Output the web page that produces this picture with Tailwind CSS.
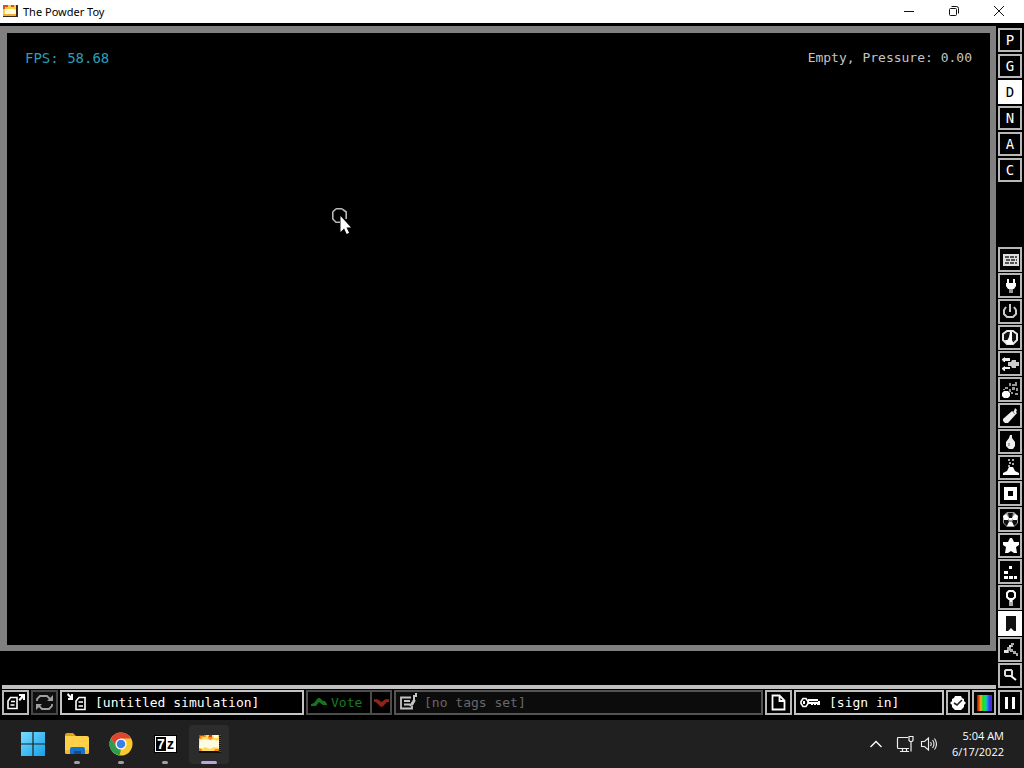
<!DOCTYPE html>
<html lang="en">
<head>
<meta charset="utf-8">
<title>The Powder Toy</title>
<script src="https://cdn.jsdelivr.net/npm/@tailwindcss/browser@4"></script>
</head>
<body class="flex h-screen flex-col overflow-hidden bg-black font-['Open_Sans',sans-serif]">
<header class="flex h-[23px] shrink-0 items-center bg-white text-black">
  <svg class="ml-[3px] h-4 w-4" viewBox="0 0 16 16" aria-hidden="true"><path fill="#3b2a20" d="M0 1h15v12H0z"/><path fill="#f7d23a" d="M0 1h13v10H0z"/><path fill="#fffbe0" d="M2 5h9l2 1v4H2z"/><path fill="#e8452a" d="M0 1h5v2H2v2H0zM8 1h3v2H8z"/><path fill="#f5b02e" d="M0 10h13v2H0z"/></svg>
  <h1 class="ml-1 text-[11px] leading-4 font-['Noto_Sans',sans-serif]">The Powder Toy</h1>
  <div class="ml-auto flex h-full pr-[2px]">
    <button aria-label="Minimize" class="flex w-[45px] items-center justify-center"><svg class="h-3 w-3" viewBox="0 0 12 12"><path stroke="#111" d="M1 5.500h10"/></svg></button>
    <button aria-label="Restore" class="flex w-[45px] items-center justify-center"><svg class="h-3 w-3" viewBox="0 0 12 12" fill="none" stroke="#111"><rect x="1.500" y="2.500" width="7" height="7" rx="1"/><path d="M3.500 .5h5a2 2 0 0 1 2 2v5"/></svg></button>
    <button aria-label="Close" class="flex w-[46px] items-center justify-center"><svg class="h-3 w-3" viewBox="0 0 12 12"><path stroke="#111" d="M1 0l10 10M11 0L1 10"/></svg></button>
  </div>
</header>

<main class="flex min-h-0 flex-1 gap-[2px] bg-black pr-[2px] pb-[5px] font-['DejaVu_Sans_Mono',monospace]">
  <div class="flex min-w-0 flex-1 flex-col pt-[3px]">
    <section aria-label="Simulation" class="relative flex flex-1 items-start justify-between border-[7px] border-r-[6px] border-b-[6px] border-[#808080] px-[18px] pt-4">
      <p class="text-[14px] leading-[18px] text-[#2c9db8]">FPS: 58.68</p>
      <p class="text-[13px] leading-[18px] text-[#c4c4c4]">Empty, Pressure: 0.00</p>
      <svg class="absolute top-[174px] left-[324px] h-7 w-5" viewBox="0 0 20 28" aria-hidden="true"><path fill="none" stroke="#b8b8b8" stroke-width="1.600" d="M5 1.800h6M5 1.800L1.800 5v7L5 15.200h4M11 1.800L15.200 5v7"/><path fill="#fff" d="M9.500 9v16l3.600-3.400 2.600 5.400 2.400-1.200-2.600-5.200H20z"/></svg>
    </section>
    <div class="mt-[34px] mb-px ml-[2px] h-1 bg-[#c0c0c0]"></div>
    <div class="flex h-[25px] gap-[2px] pl-[2px] text-[13px] leading-none text-white">
      <button aria-label="Open simulation" class="flex w-[27px] items-center justify-center border-2 border-[#b8b8b8]"><svg class="h-[21px] w-[23px] shrink-0" viewBox="0 0 23 21"><path fill="none" stroke="#fff" stroke-width="1.600" d="M6.500 5.500H13v11H4V9zM7 9.500h4M6.500 13h4"/><path fill="#fff" d="M15 2h6v6h-2V6l-3 3-1.500-1.500L17 4.500V4h-2z"/></svg></button>
      <button aria-label="Reload" class="flex w-[27px] items-center justify-center border-2 border-[#484848] bg-[#101010]"><svg class="h-[21px] w-[23px] shrink-0" viewBox="0 0 23 21"><path fill="none" stroke="#a0a0a0" stroke-width="1.800" d="M4 9V7l3-3h7l4 4M19 12v2l-3 3H9l-4-4"/><path fill="#a0a0a0" d="M20 3v6h-6zM3 18v-6h6z"/></svg></button>
      <button class="flex w-[244px] items-center border-2 border-[#c4c4c4] pl-1"><svg class="mr-[6px] h-[21px] w-[23px] shrink-0" viewBox="0 0 23 21"><path fill="#fff" d="M2 1l3 3V2h2v6H2V6h2L1 3z"/><path fill="none" stroke="#fff" stroke-width="1.600" d="M13 5.500h6v12h-9V9zM12.500 10h4.500M12.500 14h4.500"/></svg>[untitled simulation]</button>
      <div class="flex w-[86px]">
        <button class="flex w-16 items-center gap-1 border-2 border-r-0 border-[#4c4c4c] pl-[3px] text-[#187a22]"><svg class="h-[10px] w-4 shrink-0" viewBox="0 0 16 10"><path fill="#17731f" d="M7 0h2l3 3h2l2 3v1h-4L8 4 5 8H0V6l3-1z"/></svg>Vote</button>
        <button aria-label="Vote down" class="flex flex-1 items-center justify-center border-2 border-[#4c4c4c]"><svg class="h-[10px] w-[15px] shrink-0" viewBox="0 0 16 10"><path fill="#8f2417" d="M0 1h4l4 3 4-3h4v3h-2l-5 5H7L2 4H0z"/></svg></button>
      </div>
      <button class="flex min-w-0 flex-1 items-center border-2 border-[#545454] bg-[#0c0c0c] pl-1 text-[#686868]"><svg class="mr-1 h-[21px] w-5 shrink-0" viewBox="0 0 20 21" fill="none" stroke="#c4c4c4" stroke-width="1.800"><path d="M11 5.500H1v11h11v-3M4 9h6M4 12.500h6"/><path stroke-width="2" d="M10 14l4-6V4h2V1M12 13l3-5"/></svg>[no tags set]</button>
      <button aria-label="New simulation" class="flex w-[27px] items-center justify-center border-2 border-[#b8b8b8]"><svg class="h-[17px] w-[15px]" viewBox="0 0 15 17"><path fill="none" stroke="#fff" stroke-width="1.800" d="M1.500 1.500h7l5 5v9h-12zM8.500 1v6H14"/></svg></button>
      <button class="flex w-[150px] items-center border-2 border-[#c4c4c4] pl-1"><svg class="mr-[9px] h-3 w-5 shrink-0" viewBox="0 0 20 12"><path fill="none" stroke="#fff" stroke-width="1.600" d="M3 1.500h3l2 3v2l-2 3H3l-2-3v-2z"/><path fill="#fff" d="M3 4h2v3H3zM8 2h10v2h2v4h-3V7h-1v1h-2V7h-1v1h-2V7H8z"/><path fill="#222" d="M9 4h9v1H9z"/></svg>[sign in]</button>
      <button aria-label="Simulation options" class="flex w-6 items-center justify-center border-2 border-[#b8b8b8]"><svg class="h-4 w-4" viewBox="0 0 16 16"><path fill="#fff" d="M5 1h6l1 2 2 1v2l2 2-2 2v2l-3 3H5l-3-3v-2L0 8l2-2V4l2-1z"/><path fill="none" stroke="#222" stroke-width="1.600" d="M4 8l3 2 5-5"/></svg></button>
      <button aria-label="Render options" class="flex w-6 items-center justify-center border-2 border-[#b8b8b8]"><span class="h-4 w-[15px] bg-[linear-gradient(90deg,#a0100c_0%,#ff4a00_14%,#d8c020_26%,#20d820_40%,#10e070_55%,#10a8d8_68%,#2840ff_80%,#8018a8_100%)]"></span></button>
    </div>
  </div>

  <nav aria-label="Tools" class="flex w-6 shrink-0 flex-col pt-[5px]">
    <div class="flex flex-col gap-[2px] text-[14px] leading-none text-white">
      <button class="h-6 border-2 border-[#b8b8b8]">P</button>
      <button class="h-6 border-2 border-[#b8b8b8]">G</button>
      <button class="h-6 border-2 border-white bg-white text-black">D</button>
      <button class="h-6 border-2 border-[#b8b8b8]">N</button>
      <button class="h-6 border-2 border-[#b8b8b8]">A</button>
      <button class="h-6 border-2 border-[#b8b8b8]">C</button>
    </div>
    <div class="mt-auto mb-[2px] flex flex-col gap-px">
      <button aria-label="Walls" class="flex h-[25px] items-center justify-center border-2 border-[#b8b8b8]"><svg class="h-5 w-5" viewBox="0 0 20 20"><path fill="#ddd" d="M3 4h16v12H3z"/><path stroke="#222" stroke-width="1.300" stroke-dasharray="4 1" d="M5 7h12M6 10h11M5 13h12"/></svg></button>
      <button aria-label="Electronics" class="flex h-[25px] items-center justify-center border-2 border-[#b8b8b8]"><svg class="h-5 w-5" viewBox="0 0 20 20"><path fill="#fff" d="M7 3h2v4h4V3h2v4h1v3l-2 3H8l-2-3V7h1z"/><path fill="#999" d="M9 13h4v4H9z"/></svg></button>
      <button aria-label="Powered materials" class="flex h-[25px] items-center justify-center border-2 border-[#b8b8b8]"><svg class="h-5 w-5" viewBox="0 0 20 20" fill="none" stroke="#ccc" stroke-width="2"><path d="M6 5L4 8v4l3 3h6l3-3V8l-2-3M10 2v8"/></svg></button>
      <button aria-label="Sensors" class="flex h-[25px] items-center justify-center border-2 border-[#b8b8b8]"><svg class="h-5 w-5" viewBox="0 0 20 20"><path fill="#111" stroke="#e8e8e8" stroke-width="2" d="M7 3h6l4 3v6l-4 4H7l-4-4V6z"/><path fill="#fff" d="M10 4h2v8l1 2v2H7v-3l2-4zM5 12h3v3H6z"/></svg></button>
      <button aria-label="Force" class="flex h-[25px] items-center justify-center border-2 border-[#b8b8b8]"><svg class="h-5 w-5" viewBox="0 0 20 20"><path fill="#eee" d="M2 5l3-2v1h5v3H5v1H4L2 6zM2 14l3-2v1h5v2H5v2H4l-2-2z"/><path fill="#ccc" d="M8 8h3l1-2h4v2h3v4h-3v2h-4l-1-2H8z"/></svg></button>
      <button aria-label="Explosives" class="flex h-[25px] items-center justify-center border-2 border-[#b8b8b8]"><svg class="h-5 w-5" viewBox="0 0 20 20"><path fill="#fff" d="M4 11h4l2 2v3l-2 2H4l-2-2v-3z"/><path fill="#999" d="M9 9h2v3H9zM5 7h3v2H5zM9 3h2v3H9zM12 4h3v2h-3zM15 2h2v4h-2zM12 7h3v3h-3zM16 8h2v3h-2zM11 12h2v2h-2zM15 13h3v2h-3zM3 9h2v1H3z"/></svg></button>
      <button aria-label="Gases" class="flex h-[25px] items-center justify-center border-2 border-[#b8b8b8]"><svg class="h-5 w-5" viewBox="0 0 20 20"><path fill="#eee" d="M15 2l2 2-1 2 1 1-9 10H5l-2-2v-2l9-8 1 1 1-1z"/><path stroke="#888" d="M12 5l3 3"/></svg></button>
      <button aria-label="Liquids" class="flex h-[25px] items-center justify-center border-2 border-[#b8b8b8]"><svg class="h-5 w-5" viewBox="0 0 20 20"><path fill="#eee" d="M10 3h2v3l3 4v4l-2 3H9l-3-3v-4l3-4z"/><path fill="#aaa" d="M8 11h2v3H8z"/></svg></button>
      <button aria-label="Powders" class="flex h-[25px] items-center justify-center border-2 border-[#b8b8b8]"><svg class="h-5 w-5" viewBox="0 0 20 20"><path fill="#fff" d="M9 9h4l2 4 4 2v2H3v-2l4-2z"/><path fill="#aaa" d="M8 1h2v2H8zM12 1h2v2h-2zM9 4h2v2H9zM12 5h2v2h-2zM8 7h2v2H8z"/></svg></button>
      <button aria-label="Solids" class="flex h-[25px] items-center justify-center border-2 border-[#b8b8b8]"><svg class="h-5 w-5" viewBox="0 0 20 20"><path fill="#fff" fill-rule="evenodd" d="M4 3h13v13H4zM8 7v5h5V7z"/></svg></button>
      <button aria-label="Radioactive" class="flex h-[25px] items-center justify-center border-2 border-[#b8b8b8]"><svg class="h-5 w-5" viewBox="0 0 20 20"><path fill="#999" d="M7 2h7l4 4v7l-4 4H7l-4-4V6z"/><path fill="#111" d="M8 3h5l-1 5H9zM4 10h4l1 2-2 4-3-3zM17 10h-4l-1 2 2 4 3-3z"/><path fill="#fff" d="M3 6l3-2 3 4-1 2H4zM18 6l-3-2-3 4 1 2h4zM9 12h3l2 4H7zM9 8h3v2H9z"/></svg></button>
      <button aria-label="Special" class="flex h-[25px] items-center justify-center border-2 border-[#b8b8b8]"><svg class="h-5 w-5" viewBox="0 0 20 20"><path fill="#fff" d="M10 2h2l2 4h5v3l-3 2 1 6h-3l-3-2-3 2H5l1-6-3-2V6h5z"/></svg></button>
      <button aria-label="Game of Life" class="flex h-[25px] items-center justify-center border-2 border-[#b8b8b8]"><svg class="h-5 w-5" viewBox="0 0 20 20"><path fill="#fff" d="M9 4h3v3H9zM4 9h4v3H4zM4 14h4v3H4zM9 14h4v3H9zM14 14h3v3h-3z"/></svg></button>
      <button aria-label="Tools" class="flex h-[25px] items-center justify-center border-2 border-[#b8b8b8]"><svg class="h-5 w-5" viewBox="0 0 20 20"><path fill="none" stroke="#fff" stroke-width="2" d="M9 3h4l2 2v4l-2 2H9L7 9V5z"/><path fill="#aaa" d="M9 12h4v6H9z"/><path fill="#fff" d="M10 11h2v3h-2z"/></svg></button>
      <button aria-label="Favorites" class="flex h-[25px] items-center justify-center border-2 border-white bg-white"><svg class="h-5 w-5" viewBox="0 0 20 20"><path fill="#111" d="M6 2h10v15h-2l-3-3-3 3H6z"/></svg></button>
      <button aria-label="Decoration tools" class="flex h-[25px] items-center justify-center border-2 border-[#b8b8b8]"><svg class="h-5 w-5" viewBox="0 0 20 20"><path fill="#aaa" d="M11 3h3v2h-1v2h-2v2h2v2h3v2h2v3h-2v-2h-3v-2h-3v-1H9v2H4v-3h3V7h2V5h2z"/><path fill="#e4e4e4" d="M4 10h4v3H4zM9 5h2v2H9z"/></svg></button>
      <button aria-label="Search" class="flex h-[25px] items-center justify-center border-2 border-[#b8b8b8]"><svg class="h-5 w-5" viewBox="0 0 20 20"><path fill="none" stroke="#ddd" stroke-width="2" d="M6 4h5l1 1v4l-1 1H6L5 9V5z"/><path fill="none" stroke="#fff" stroke-width="2" d="M11 10l5 4"/></svg></button>
    </div>
    <button aria-label="Pause" class="flex h-[25px] shrink-0 items-center justify-center gap-1 border-2 border-[#b8b8b8]"><span class="h-3 w-[3px] bg-white"></span><span class="h-3 w-[3px] bg-white"></span></button>
  </nav>
</main>

<footer class="flex h-12 shrink-0 items-center bg-[#202020] pr-5 pl-[13px] text-white">
  <nav aria-label="Taskbar" class="flex items-center gap-1">
    <button aria-label="Start" class="flex h-[39px] w-10 items-center justify-center"><svg class="h-6 w-6" viewBox="0 0 24 24"><defs><linearGradient id="win" x2="1" y2="1"><stop stop-color="#78dcff"/><stop offset="1" stop-color="#159fe8"/></linearGradient></defs><path fill="url(#win)" d="M0 0h11.400v11.400H0zM12.600 0H24v11.400H12.600zM0 12.600h11.400V24H0zM12.600 12.600H24V24H12.600z"/></svg></button>
    <button aria-label="File Explorer" class="relative flex h-[39px] w-10 items-center justify-center"><svg class="h-6 w-[26px]" viewBox="0 0 26 24"><path fill="#e2a012" d="M1 3q0-2 2-2h6l3 3H1z"/><path fill="#ffd04a" d="M1 4h22q2 0 2 2v14q0 2-2 2H3q-2 0-2-2z"/><path fill="#f6b92b" d="M1 18h24v2q0 2-2 2H3q-2 0-2-2z"/><path fill="#1673c8" d="M6 22v-5q0-2 2-2h11q2 0 2 2v5z"/><path fill="#0d4f98" d="M10 19h7v3h-7z"/></svg><span class="absolute bottom-0 h-[3px] w-[6px] rounded-full bg-[#a0a0a0]"></span></button>
    <button aria-label="Chrome" class="relative flex h-[39px] w-10 items-center justify-center"><svg class="h-6 w-6" viewBox="0 0 24 24"><circle cx="12" cy="12" r="11.500" fill="#f8c928"/><path fill="#e04336" d="M2 6.200a11.500 11.500 0 0 1 20 .3H12L7 15z"/><path fill="#2d9c4c" d="M2 6.200l5.200 8.600L12 17.500l-1.500 5.900A11.500 11.500 0 0 1 2 6.200z"/><circle cx="12" cy="12" r="5.600" fill="#fff"/><circle cx="12" cy="12" r="4.300" fill="#3c7fe8"/></svg><span class="absolute bottom-0 h-[3px] w-[6px] rounded-full bg-[#a0a0a0]"></span></button>
    <button aria-label="7-Zip" class="relative flex h-[39px] w-10 items-center justify-center"><span class="flex h-[18px] w-[23px] items-center justify-center border border-black bg-white font-['Liberation_Sans',sans-serif] text-[14px] leading-none font-bold"><span class="bg-black px-px text-white">7</span><span class="pl-px text-black">z</span></span><span class="absolute bottom-0 h-[3px] w-[6px] rounded-full bg-[#a0a0a0]"></span></button>
    <button aria-label="The Powder Toy" class="relative flex h-[39px] w-10 items-center justify-center rounded bg-[#2c2c2c]"><svg class="h-5 w-[23px]" viewBox="0 0 23 20"><path fill="#111" d="M1 1h22v18H1z"/><path fill="#ffd95c" d="M1 1h20v16H1z"/><path fill="#fffbe0" d="M2 6l5-1 3 1 4-1 5 2 2-1v8l-5-1-4 2-5-2-3 2-3-1zM15 1h5v3h-4z"/><path fill="#f98a1c" d="M1 1h7v2H4L3 5H1zM10 2l4 1 1 2-3 1-2-2zM1 14l3 1v2H1zM17 15h4v2h-5z"/><path fill="#d8331c" d="M1 1h5v1H2v2H1zM11 1h3v2h-3z"/><path stroke="#888" stroke-dasharray="1 1" d="M22 1v17"/></svg><span class="absolute bottom-0 h-[3px] w-4 rounded-full bg-[#bda2dc]"></span></button>
  </nav>
  <div class="ml-auto flex items-center">
    <button aria-label="Show hidden icons" class="mr-3"><svg class="h-4 w-4" viewBox="0 0 16 16"><path fill="none" stroke="#fff" stroke-width="1.300" d="M2.500 11L8 5.500l5.500 5.500"/></svg></button>
    <button aria-label="Network" class="mr-1"><svg class="h-[18px] w-5" viewBox="0 0 20 18" fill="none" stroke="#eee" stroke-width="1.200"><path d="M12 2.500H2.500q-1 0-1 1v9q0 1 1 1H13M4 16.500h9M6.500 13.500v3M10.500 13.500v3M13 1.500h4v4l-1 1h-2l-1-1zM15 6.500v10"/></svg></button>
    <button aria-label="Volume" class="mr-[14px]"><svg class="h-[18px] w-[18px]" viewBox="0 0 18 18" fill="none" stroke="#eee" stroke-width="1.100"><path d="M1.500 6.500h3l4-3.500v12l-4-3.500h-3zM10.500 7q1.500 2 0 4M12.500 5q3 4 0 8M14.500 3.500q4 5.500 0 11"/></svg></button>
    <button class="text-right text-[11px] leading-4"><time datetime="2022-06-17T05:04"><span class="block">5:04 AM</span><span class="block">6/17/2022</span></time></button>
  </div>
</footer>
</body>
</html>
